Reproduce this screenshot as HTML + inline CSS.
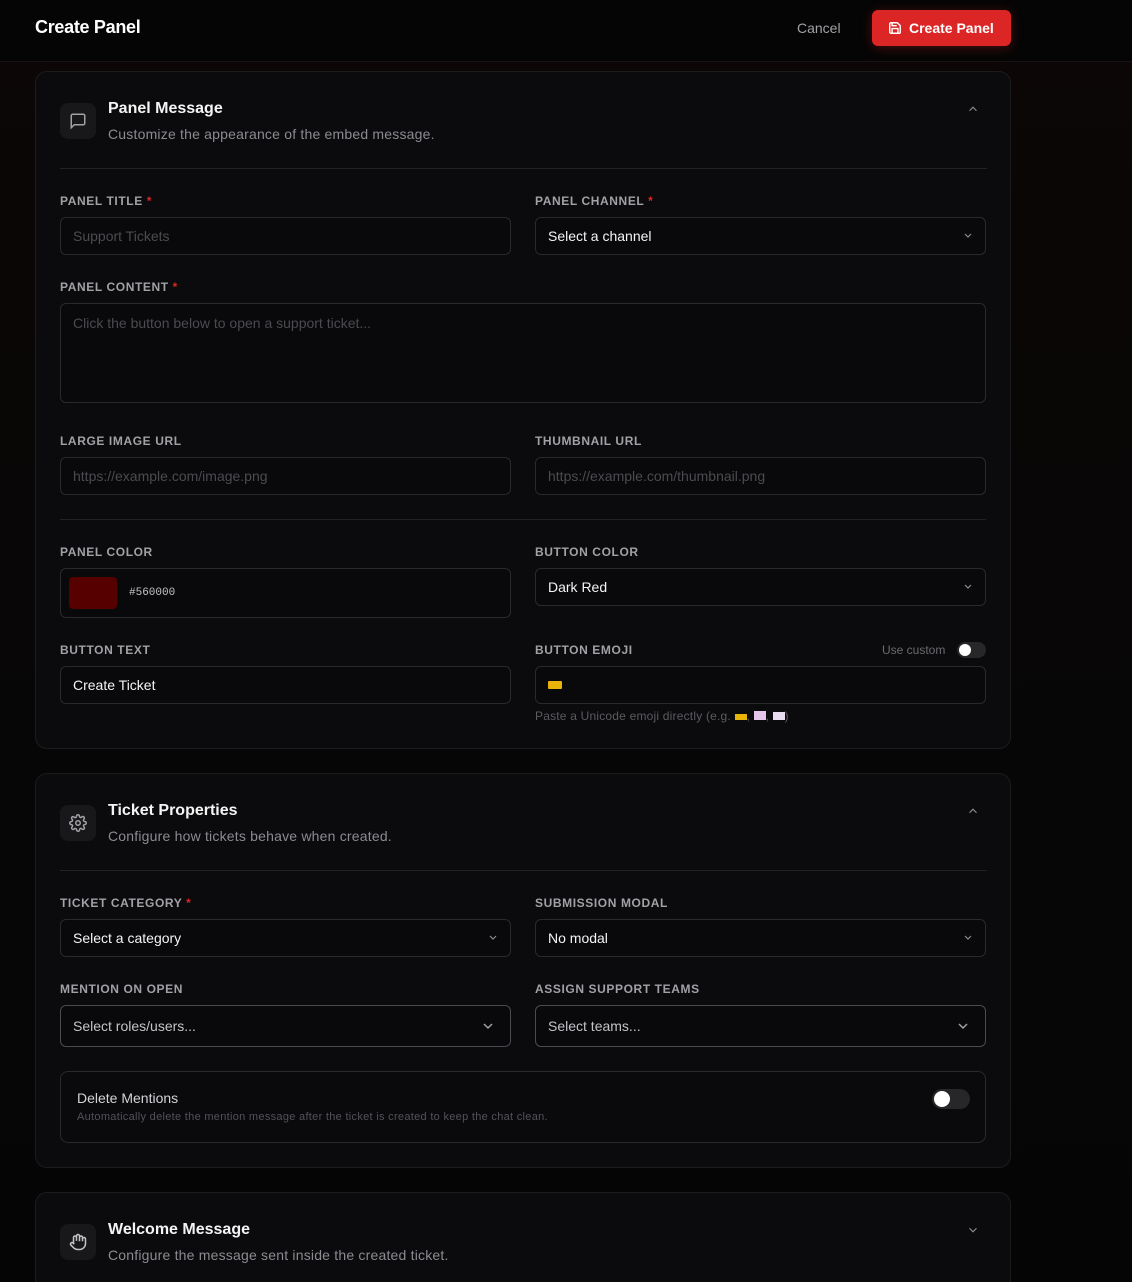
<!DOCTYPE html>
<html style="background:#060606;overflow:hidden;height:1282px"><head><meta charset="utf-8"><style>
*{box-sizing:border-box;margin:0;padding:0}
body{width:1132px;height:1282px;overflow:hidden;background:linear-gradient(180deg,#0c0706 0px,#090606 400px,#060606 900px,#050505 1282px) no-repeat;font-family:"Liberation Sans",sans-serif;position:relative;color:#fff}
.hdr{position:absolute;left:0;top:0;width:1132px;height:62px;background:#050505;border-bottom:1px solid #1a1212}
.a{position:absolute}
.card{position:absolute;left:35px;width:976px;background:#0b0b0d;border:1px solid #1c1c1f;border-radius:12px}
.ib{position:absolute;width:36px;height:36px;border-radius:8px;background:#18181b;display:flex;align-items:center;justify-content:center}
.t{position:absolute;font-size:16px;font-weight:bold;color:#f4f4f5}
.s{position:absolute;font-size:14px;color:#8b8b91;letter-spacing:.2px}
.hr{position:absolute;height:1px;background:#222226}
.lb{position:absolute;font-size:12px;font-weight:bold;letter-spacing:.6px;color:#a1a1a6}
.lb b{color:#dc2626}
.in{position:absolute;height:38px;border:1px solid #2a2a2e;border-radius:6px;background:#09090b;font-size:14px;padding-left:12px;display:flex;align-items:center;color:#f4f4f5}
.ph{color:#4b4b50}
.chev{position:absolute;right:12px;top:50%;margin-top:-4px}
</style></head><body>
<div class="hdr">
 <div class="a" style="left:35px;top:17px;font-size:18px;font-weight:bold;letter-spacing:-.3px">Create Panel</div>
 <div class="a" style="left:797px;top:20px;font-size:14px;color:#a1a1a6">Cancel</div>
 <div class="a" style="left:872px;top:10px;width:139px;height:36px;background:#dc2626;border-radius:6px;box-shadow:0 2px 12px rgba(220,38,38,.3)">
  <svg class="a" style="left:16px;top:11px" width="14" height="14" viewBox="0 0 24 24" fill="none" stroke="#fff" stroke-width="2.4"><path d="M19 21H5a2 2 0 0 1-2-2V5a2 2 0 0 1 2-2h11l5 5v11a2 2 0 0 1-2 2z"/><path d="M17 21v-8H7v8M7 3v5h8"/></svg>
  <div class="a" style="left:37px;top:10px;font-size:14px;font-weight:bold">Create Panel</div>
 </div>
</div>

<div class="card" style="top:71px;height:678px">
 <div class="ib" style="left:24px;top:31px"><svg width="18" height="18" viewBox="0 0 24 24" fill="none" stroke="#a1a1a6" stroke-width="2"><path d="M21 15a2 2 0 0 1-2 2H7l-4 4V5a2 2 0 0 1 2-2h14a2 2 0 0 1 2 2z"/></svg></div>
 <div class="t" style="left:72px;top:28px">Panel Message</div>
 <div class="s" style="left:72px;top:54px">Customize the appearance of the embed message.</div>
 <svg class="a" style="left:930px;top:30px" width="14" height="14" viewBox="0 0 24 24" fill="none" stroke="#8b8b91" stroke-width="2"><path d="M6 15l6-6 6 6"/></svg>
 <div class="hr" style="left:24px;top:96px;width:927px"></div>
</div>
<div class="lb" style="left:60px;top:194px">PANEL TITLE <b>*</b></div>
<div class="lb" style="left:535px;top:194px">PANEL CHANNEL <b>*</b></div>
<div class="in" style="left:60px;top:217px;width:451px"><span class="ph">Support Tickets</span></div>
<div class="in" style="left:535px;top:217px;width:451px">Select a channel<svg class="chev" width="10" height="8" viewBox="0 0 10 8" fill="none" stroke="#8b8b91" stroke-width="1.2"><path d="M2 2l3 3 3-3"/></svg></div>
<div class="lb" style="left:60px;top:280px">PANEL CONTENT <b>*</b></div>
<div class="in" style="left:60px;top:303px;width:926px;height:100px;align-items:flex-start;padding-top:11px"><span class="ph">Click the button below to open a support ticket...</span></div>
<div class="lb" style="left:60px;top:434px">LARGE IMAGE URL</div>
<div class="lb" style="left:535px;top:434px">THUMBNAIL URL</div>
<div class="in" style="left:60px;top:457px;width:451px"><span class="ph">https://example.com/image.png</span></div>
<div class="in" style="left:535px;top:457px;width:451px"><span class="ph">https://example.com/thumbnail.png</span></div>
<div class="hr" style="left:60px;top:519px;width:926px"></div>
<div class="lb" style="left:60px;top:545px">PANEL COLOR</div>
<div class="lb" style="left:535px;top:545px">BUTTON COLOR</div>
<div class="in" style="left:60px;top:568px;width:451px;height:50px;padding-left:8px"><div style="width:48px;height:32px;background:#560000;border-radius:4px"></div><span style="font-family:'Liberation Mono',monospace;font-size:11px;color:#c4c4c8;margin-left:12px">#560000</span></div>
<div class="in" style="left:535px;top:568px;width:451px">Dark Red<svg class="chev" width="10" height="8" viewBox="0 0 10 8" fill="none" stroke="#8b8b91" stroke-width="1.2"><path d="M2 2l3 3 3-3"/></svg></div>
<div class="lb" style="left:60px;top:643px">BUTTON TEXT</div>
<div class="lb" style="left:535px;top:643px">BUTTON EMOJI</div>
<div class="a" style="left:882px;top:643px;font-size:12px;color:#6b6b70">Use custom</div>
<div class="a" style="left:957px;top:642px;width:29px;height:16px;border-radius:8px;background:#27272a"><div style="position:absolute;left:2px;top:2px;width:12px;height:12px;border-radius:6px;background:#fff"></div></div>
<div class="in" style="left:60px;top:666px;width:451px">Create Ticket</div>
<div class="in" style="left:535px;top:666px;width:451px"><div style="width:14px;height:8px;background:#eab308;border-radius:1px"></div></div>
<div class="a" style="left:535px;top:709px;font-size:12px;color:#5b5b60;letter-spacing:.2px">Paste a Unicode emoji directly (e.g. <span style="display:inline-block;width:12px;height:6px;background:#eab308"></span>, <span style="display:inline-block;width:12px;height:9px;background:#e5c6e8"></span>, <span style="display:inline-block;width:12px;height:8px;background:#e8dcf0"></span>)</div>

<div class="card" style="top:773px;height:395px">
 <div class="ib" style="left:24px;top:31px"><svg width="18" height="18" viewBox="0 0 24 24" fill="none" stroke="#a1a1a6" stroke-width="2"><circle cx="12" cy="12" r="3"/><path d="M19.4 15a1.7 1.7 0 0 0 .3 1.8l.1.1a2 2 0 1 1-2.8 2.8l-.1-.1a1.7 1.7 0 0 0-1.8-.3 1.7 1.7 0 0 0-1 1.5V21a2 2 0 1 1-4 0v-.1a1.7 1.7 0 0 0-1.1-1.5 1.7 1.7 0 0 0-1.800.3l-.1.1a2 2 0 1 1-2.8-2.8l.1-.1a1.7 1.7 0 0 0 .3-1.8 1.7 1.7 0 0 0-1.5-1H3a2 2 0 1 1 0-4h.1a1.7 1.7 0 0 0 1.5-1.1 1.7 1.7 0 0 0-.3-1.8l-.1-.1a2 2 0 1 1 2.8-2.8l.1.1a1.7 1.7 0 0 0 1.8.3H9a1.7 1.7 0 0 0 1-1.5V3a2 2 0 1 1 4 0v.1a1.7 1.7 0 0 0 1 1.5 1.7 1.7 0 0 0 1.8-.3l.1-.1a2 2 0 1 1 2.8 2.8l-.1.1a1.7 1.7 0 0 0-.3 1.8V9a1.7 1.7 0 0 0 1.5 1H21a2 2 0 1 1 0 4h-.1a1.7 1.7 0 0 0-1.500 1z"/></svg></div>
 <div class="t" style="left:72px;top:28px">Ticket Properties</div>
 <div class="s" style="left:72px;top:54px">Configure how tickets behave when created.</div>
 <svg class="a" style="left:930px;top:30px" width="14" height="14" viewBox="0 0 24 24" fill="none" stroke="#8b8b91" stroke-width="2"><path d="M6 15l6-6 6 6"/></svg>
 <div class="hr" style="left:24px;top:96px;width:927px"></div>
</div>
<div class="lb" style="left:60px;top:896px">TICKET CATEGORY <b>*</b></div>
<div class="lb" style="left:535px;top:896px">SUBMISSION MODAL</div>
<div class="in" style="left:60px;top:919px;width:451px">Select a category<svg class="chev" width="10" height="8" viewBox="0 0 10 8" fill="none" stroke="#8b8b91" stroke-width="1.2"><path d="M2 2l3 3 3-3"/></svg></div>
<div class="in" style="left:535px;top:919px;width:451px">No modal<svg class="chev" width="10" height="8" viewBox="0 0 10 8" fill="none" stroke="#8b8b91" stroke-width="1.2"><path d="M2 2l3 3 3-3"/></svg></div>
<div class="lb" style="left:60px;top:982px">MENTION ON OPEN</div>
<div class="lb" style="left:535px;top:982px">ASSIGN SUPPORT TEAMS</div>
<div class="in" style="left:60px;top:1005px;width:451px;height:42px;border-color:#4a4a50;color:#c4c4c8">Select roles/users...<svg class="chev" width="12" height="8" viewBox="0 0 12 8" fill="none" stroke="#a1a1a6" stroke-width="1.5" style="right:16px"><path d="M2 2l4 4 4-4"/></svg></div>
<div class="in" style="left:535px;top:1005px;width:451px;height:42px;border-color:#4a4a50;color:#c4c4c8">Select teams...<svg class="chev" width="12" height="8" viewBox="0 0 12 8" fill="none" stroke="#a1a1a6" stroke-width="1.5" style="right:16px"><path d="M2 2l4 4 4-4"/></svg></div>
<div class="a" style="left:60px;top:1071px;width:926px;height:72px;border:1px solid #2a2a2e;border-radius:8px;background:#0a0a0c">
 <div class="a" style="left:16px;top:18px;font-size:14px;color:#d4d4d8">Delete Mentions</div>
 <div class="a" style="left:16px;top:39px;font-size:11px;color:#52525a;letter-spacing:.3px">Automatically delete the mention message after the ticket is created to keep the chat clean.</div>
 <div class="a" style="left:871px;top:17px;width:38px;height:20px;border-radius:10px;background:#27272a"><div style="position:absolute;left:2px;top:2px;width:16px;height:16px;border-radius:8px;background:#fff"></div></div>
</div>

<div class="card" style="top:1192px;height:90px;border-bottom:none;border-radius:12px 12px 0 0">
 <div class="ib" style="left:24px;top:31px"><svg width="18" height="18" viewBox="0 0 24 24" fill="none" stroke="#c4c4c8" stroke-width="2"><path d="M18 11V6a2 2 0 0 0-4 0v5M14 10V4a2 2 0 0 0-4 0v6M10 10.5V6a2 2 0 0 0-4 0v8"/><path d="M18 8a2 2 0 1 1 4 0v6a8 8 0 0 1-8 8h-2c-2.8 0-4.5-.9-6-2.4l-3.6-3.6a2 2 0 0 1 2.8-2.8L7 15"/></svg></div>
 <div class="t" style="left:72px;top:28px">Welcome Message</div>
 <div class="s" style="left:72px;top:54px">Configure the message sent inside the created ticket.</div>
 <svg class="a" style="left:930px;top:30px" width="14" height="14" viewBox="0 0 24 24" fill="none" stroke="#8b8b91" stroke-width="2"><path d="M6 9l6 6 6-6"/></svg>
</div>
</body></html>
